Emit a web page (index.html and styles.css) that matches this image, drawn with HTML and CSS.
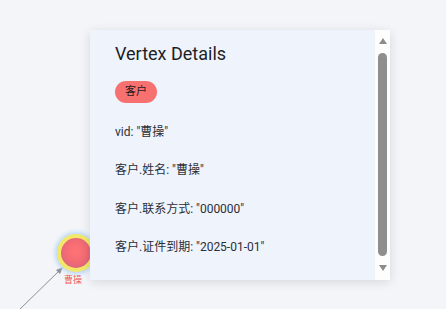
FILE: index.html
```
<!DOCTYPE html>
<html lang="zh">

<head>
    <meta charset="UTF-8">
    <title>Graph</title>
    <link rel="stylesheet" href="styles.css">
</head>

<body>

    <div id="graf">
        <svg class="kanter" width="446" height="309">
            <line x1="18" y1="311" x2="60" y2="270" stroke="#8a8f99" stroke-width="1" />
            <polygon points="63,267 56,270 60,274" fill="#8a8f99" />
        </svg>

        <div class="node" style="left: 57px; top: 234px;">
            <div class="kerne"></div>
        </div>
        <span class="nodeNavn" style="left: 64px; top: 275px;">曹操</span>
    </div>

    <div id="detaljer">
        <div class="indhold">
            <h3>Vertex Details</h3>
            <span class="maerke">客户</span>
            <p>vid: "曹操"</p>
            <p>客户.姓名: "曹操"</p>
            <p>客户.联系方式: "000000"</p>
            <p>客户.证件到期: "2025-01-01"</p>
        </div>
        <div class="rullebar">
            <div class="pil op"></div>
            <div class="greb"></div>
            <div class="pil ned"></div>
        </div>
    </div>

</body>

</html>
```

FILE: styles.css
```
body {
    margin: 0;
    width: 446px;
    height: 309px;
    overflow: hidden;
    background-color: #f3f5f9;
    font-family: "Roboto", "Noto Sans CJK SC", sans-serif;
    position: relative;
}

#graf {
    position: absolute;
    top: 0px;
    left: 0px;
    width: 446px;
    height: 309px;
}

.kanter {
    position: absolute;
    top: 0px;
    left: 0px;
}

.node {
    position: absolute;
    width: 38px;
    height: 38px;
    border-radius: 50%;
    background-color: #f3e86a;
    box-shadow: 0 0 4px 2px #b9d6f5;
    display: flex;
    align-items: center;
    justify-content: center;
}

.kerne {
    width: 30px;
    height: 30px;
    border-radius: 50%;
    background: radial-gradient(circle at 50% 45%, #ff7474 0%, #f46b74 45%, #c8637f 100%);
}

.nodeNavn {
    position: absolute;
    font-size: 9px;
    line-height: 11px;
    color: #ef5b5b;
}

#detaljer {
    position: absolute;
    top: 30px;
    left: 90px;
    width: 300px;
    height: 250px;
    display: flex;
    background-color: #eff3fc;
    box-shadow: 0 2px 10px rgba(0, 0, 0, 0.12);
}

.indhold {
    flex: 1;
    overflow: hidden;
    padding: 12px 25px 0 25px;
    display: flex;
    flex-direction: column;
    align-items: flex-start;
    gap: 18px;
}

h3 {
    margin: 0px;
    font-size: 18px;
    font-weight: 400;
    line-height: 24px;
    color: #1c1f26;
}

.maerke {
    margin-top: -3px;
    margin-bottom: 1px;
    background-color: #f87171;
    color: #2a1a1a;
    font-size: 11px;
    line-height: 22px;
    padding: 0 10px;
    border-radius: 11px;
}

p {
    margin: 0px;
    font-size: 12px;
    line-height: 20px;
    color: #2b2f36;
}

p + p {
    margin-top: 0.4px;
}

.rullebar {
    width: 15px;
    background-color: #fdfdfd;
    display: flex;
    flex-direction: column;
    align-items: center;
    padding-top: 8px;
}

.pil {
    width: 0px;
    height: 0px;
    border-left: 4px solid transparent;
    border-right: 4px solid transparent;
}

.op {
    border-bottom: 6px solid #8c8c8c;
}

.ned {
    border-top: 6px solid #8c8c8c;
}

.greb {
    width: 9px;
    height: 203px;
    margin: 9px 0;
    border-radius: 5px;
    background-color: #8e8e8e;
}
```
